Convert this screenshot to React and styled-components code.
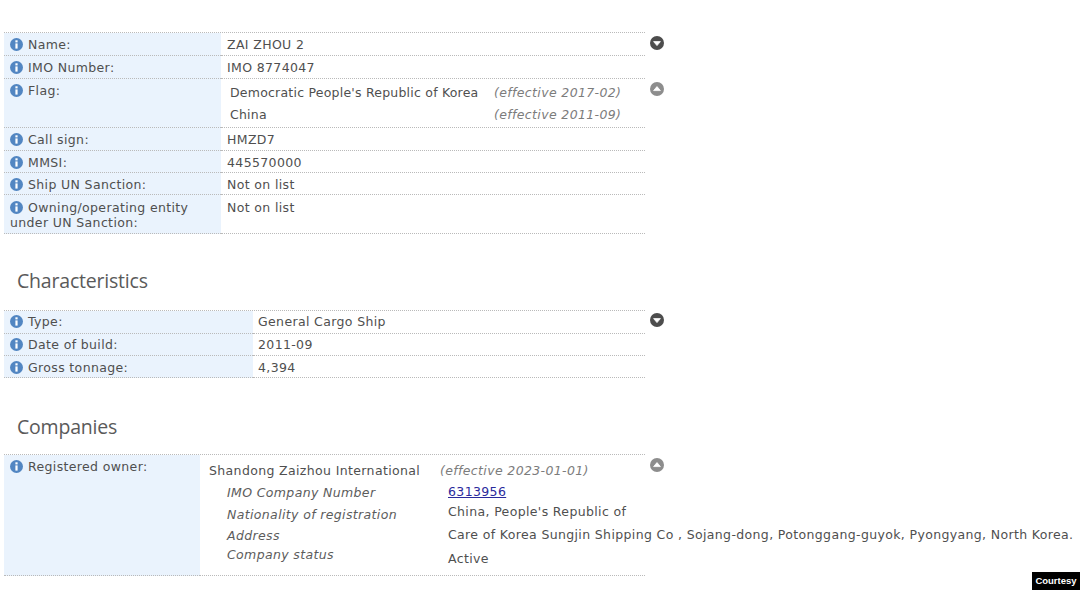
import React from "react"
import styled, { createGlobalStyle } from "styled-components"

const GlobalStyle = createGlobalStyle`
  html, body {
    margin: 0;
    padding: 0;
    background: #fff;
    overflow: hidden;
  }
`

const Page = styled.div`
  position: relative;
  width: 1080px;
  height: 608px;
  padding: 32px 0 0 4px;
  box-sizing: border-box;
  overflow: hidden;
  font-family: "DejaVu Sans", Verdana, sans-serif;
  font-size: 12.5px;
  letter-spacing: 0.36px;
  color: #4f4f4f;
`

const Table = styled.div`
  width: 641px;
  border-top: 1px dotted #bababa;
`

const Row = styled.div`
  display: flex;
  width: 641px;
  height: ${(p) => p.$h}px;
  box-sizing: border-box;
  position: relative;
`

const Label = styled.div`
  flex: 0 0 ${(p) => p.$w}px;
  box-sizing: border-box;
  background: #eaf3fd;
  padding: ${(p) => p.$top}px 20px 0 6px;
  line-height: 15px;
  border-bottom: 1px dotted #bababa;
`

const Value = styled.div`
  flex: 1;
  min-width: 0;
  padding: ${(p) => p.$top}px 0 0 ${(p) => p.$left || 5}px;
  line-height: 15px;
  border-bottom: 1px dotted #bababa;
`

const InfoDot = styled.svg`
  width: 13px;
  height: 13px;
  margin-right: 5px;
  vertical-align: -2px;
`

const ToggleDot = styled.svg`
  display: block;
  width: 14px;
  height: 14px;
  margin: ${(p) => p.$top}px 0 0 5px;
`

const ToggleSlot = styled.div`
  position: absolute;
  left: 641px;
  top: 0;
`

const FlagList = styled.div`
  display: grid;
  grid-template-columns: 264px auto;
  padding: 2px 0 0 4px;
  row-gap: 7px;
`

const FlagName = styled.span`
  letter-spacing: 0.22px;
`

const Effective = styled.span`
  font-style: italic;
  color: #7c7c7c;
  white-space: nowrap;
`

const Heading = styled.h2`
  margin: ${(p) => p.$top}px 0 ${(p) => p.$bottom}px 13px;
  font-family: "Open Sans", "DejaVu Sans", sans-serif;
  font-size: 19.5px;
  font-weight: 400;
  line-height: 24px;
  letter-spacing: -0.2px;
  color: #5a5a5a;
`

const OwnerHead = styled.div`
  display: flex;
  padding: 7px 0 0 4px;
  white-space: nowrap;
  line-height: 15px;
`

const OwnerName = styled.span`
  width: 231px;
`

const Details = styled.div`
  display: flex;
  margin: 7px 0 0 22px;
  white-space: nowrap;
`

const TermColumn = styled.div`
  flex: 0 0 221px;
  font-style: italic;
  color: #5c5c5c;
`

const DescColumn = styled.div`
  margin-top: -1px;
`

const Line = styled.div`
  line-height: 15px;
  height: ${(p) => p.$h}px;
`

const CompanyLink = styled.a`
  color: #2a2a9c;
  text-decoration: underline;
`

const Credit = styled.div`
  position: absolute;
  right: 0;
  top: 572px;
  width: 48px;
  height: 18px;
  background: #000;
  color: #fff;
  font-family: "Liberation Sans", Arial, sans-serif;
  font-size: 9.5px;
  letter-spacing: 0;
  font-weight: 700;
  line-height: 18px;
  text-align: center;
`

const Info = () => (
  <InfoDot viewBox="0 0 13 13">
    <circle cx="6.5" cy="6.5" r="6.5" fill="#5286c2" />
    <rect x="5.4" y="2.3" width="2.2" height="2.1" fill="#fff" />
    <rect x="5.4" y="5.4" width="2.2" height="5.2" fill="#fff" />
  </InfoDot>
)

const Toggle = ({ dir, top }) => (
  <ToggleSlot>
    <ToggleDot $top={top} viewBox="0 0 14 14">
      <circle cx="7" cy="7" r="7" fill={dir === "down" ? "#4d4d4d" : "#8d8d8d"} />
      <path
        d={dir === "down" ? "M3.6 5.6h6.8L7 9.6z" : "M3.6 8.6h6.8L7 4.6z"}
        fill="#fff"
        stroke="#fff"
        strokeLinejoin="round"
        strokeWidth="0.8"
      />
    </ToggleDot>
  </ToggleSlot>
)

const App = () => (
  <Page>
    <GlobalStyle />
    <Table>
      <Row $h={23}>
        <Label $w={217} $top={4}><Info />Name:</Label>
        <Value $top={4} $left={6}>ZAI ZHOU 2</Value>
        <Toggle dir="down" top={3} />
      </Row>
      <Row $h={23}>
        <Label $w={217} $top={4}><Info />IMO Number:</Label>
        <Value $top={4} $left={6}>IMO 8774047</Value>
      </Row>
      <Row $h={49}>
        <Label $w={217} $top={4}><Info />Flag:</Label>
        <Value $top={4}>
          <FlagList>
            <FlagName>Democratic People's Republic of Korea</FlagName>
            <Effective>(effective 2017-02)</Effective>
            <FlagName>China</FlagName>
            <Effective>(effective 2011-09)</Effective>
          </FlagList>
        </Value>
        <Toggle dir="up" top={3} />
      </Row>
      <Row $h={23}>
        <Label $w={217} $top={4}><Info />Call sign:</Label>
        <Value $top={4} $left={6}>HMZD7</Value>
      </Row>
      <Row $h={22}>
        <Label $w={217} $top={4}><Info />MMSI:</Label>
        <Value $top={4} $left={6}>445570000</Value>
      </Row>
      <Row $h={22}>
        <Label $w={217} $top={4}><Info />Ship UN Sanction:</Label>
        <Value $top={4} $left={6}>Not on list</Value>
      </Row>
      <Row $h={39}>
        <Label $w={217} $top={5}><Info />Owning/operating entity under UN Sanction:</Label>
        <Value $top={5} $left={6}>Not on list</Value>
      </Row>
    </Table>

    <Heading $top={35} $bottom={17}>Characteristics</Heading>

    <Table>
      <Row $h={23}>
        <Label $w={249} $top={3}><Info />Type:</Label>
        <Value $top={3}>General Cargo Ship</Value>
        <Toggle dir="down" top={2} />
      </Row>
      <Row $h={22}>
        <Label $w={249} $top={3}><Info />Date of build:</Label>
        <Value $top={3}>2011-09</Value>
      </Row>
      <Row $h={22}>
        <Label $w={249} $top={4}><Info />Gross tonnage:</Label>
        <Value $top={4}>4,394</Value>
      </Row>
    </Table>

    <Heading $top={37} $bottom={15}>Companies</Heading>

    <Table>
      <Row $h={121}>
        <Label $w={196} $top={4}><Info />Registered owner:</Label>
        <Value $top={1}>
          <OwnerHead>
            <OwnerName>Shandong Zaizhou International</OwnerName>
            <Effective>(effective 2023-01-01)</Effective>
          </OwnerHead>
          <Details>
            <TermColumn>
              <Line $h={22}>IMO Company Number</Line>
              <Line $h={21}>Nationality of registration</Line>
              <Line $h={19}>Address</Line>
              <Line $h={15}>Company status</Line>
            </TermColumn>
            <DescColumn>
              <Line $h={20}><CompanyLink href="#">6313956</CompanyLink></Line>
              <Line $h={23}>China, People's Republic of</Line>
              <Line $h={24}>Care of Korea Sungjin Shipping Co , Sojang-dong, Potonggang-guyok, Pyongyang, North Korea.</Line>
              <Line $h={15}>Active</Line>
            </DescColumn>
          </Details>
        </Value>
        <Toggle dir="up" top={3} />
      </Row>
    </Table>

    <Credit>Courtesy</Credit>
  </Page>
)

export default App
